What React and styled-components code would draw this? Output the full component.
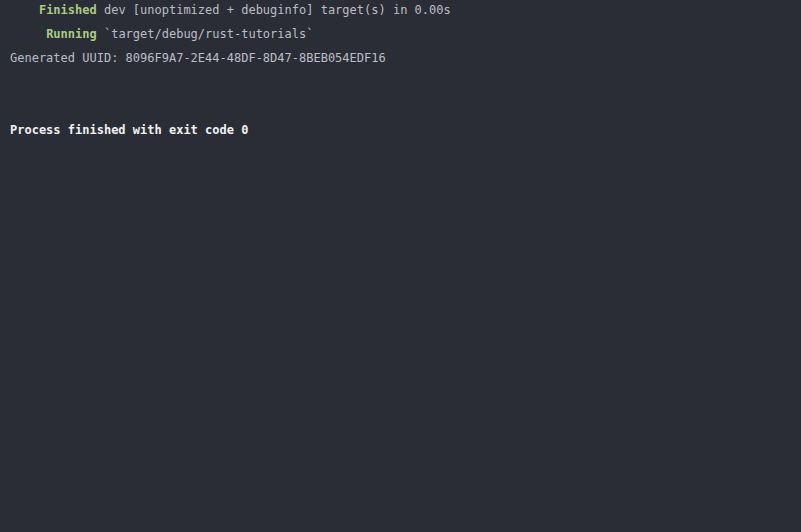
import React from 'react'
import styled, { createGlobalStyle } from 'styled-components'

const GlobalStyle = createGlobalStyle`
  html, body {
    margin: 0;
    padding: 0;
    background: #2b2d36;
  }
  #root {
    min-height: 100vh;
  }
`

const Console = styled.div`
  min-height: 100vh;
  box-sizing: border-box;
  background: #2b2d36;
  color: #bcbec4;
  font-family: 'DejaVu Sans Mono', 'Liberation Mono', monospace;
  font-size: 12px;
  line-height: 24px;
  padding: 0 10px;
  margin-top: -2px;
  white-space: pre;
`

const Line = styled.div`
  height: 24px;
  font-weight: ${props => (props.bold ? 'bold' : 'normal')};
  color: ${props => (props.bold ? '#f0f1f3' : 'inherit')};
`

const Status = styled.span`
  color: #aacb84;
  font-weight: bold;
`

const App = () => (
  <>
    <GlobalStyle />
    <Console>
      <Line>
        {'    '}
        <Status>Finished</Status> dev [unoptimized + debuginfo] target(s) in 0.00s
      </Line>
      <Line>
        {'     '}
        <Status>Running</Status> `target/debug/rust-tutorials`
      </Line>
      <Line>Generated UUID: 8096F9A7-2E44-48DF-8D47-8BEB054EDF16</Line>
      <Line />
      <Line />
      <Line bold>Process finished with exit code 0</Line>
    </Console>
  </>
)

export default App
